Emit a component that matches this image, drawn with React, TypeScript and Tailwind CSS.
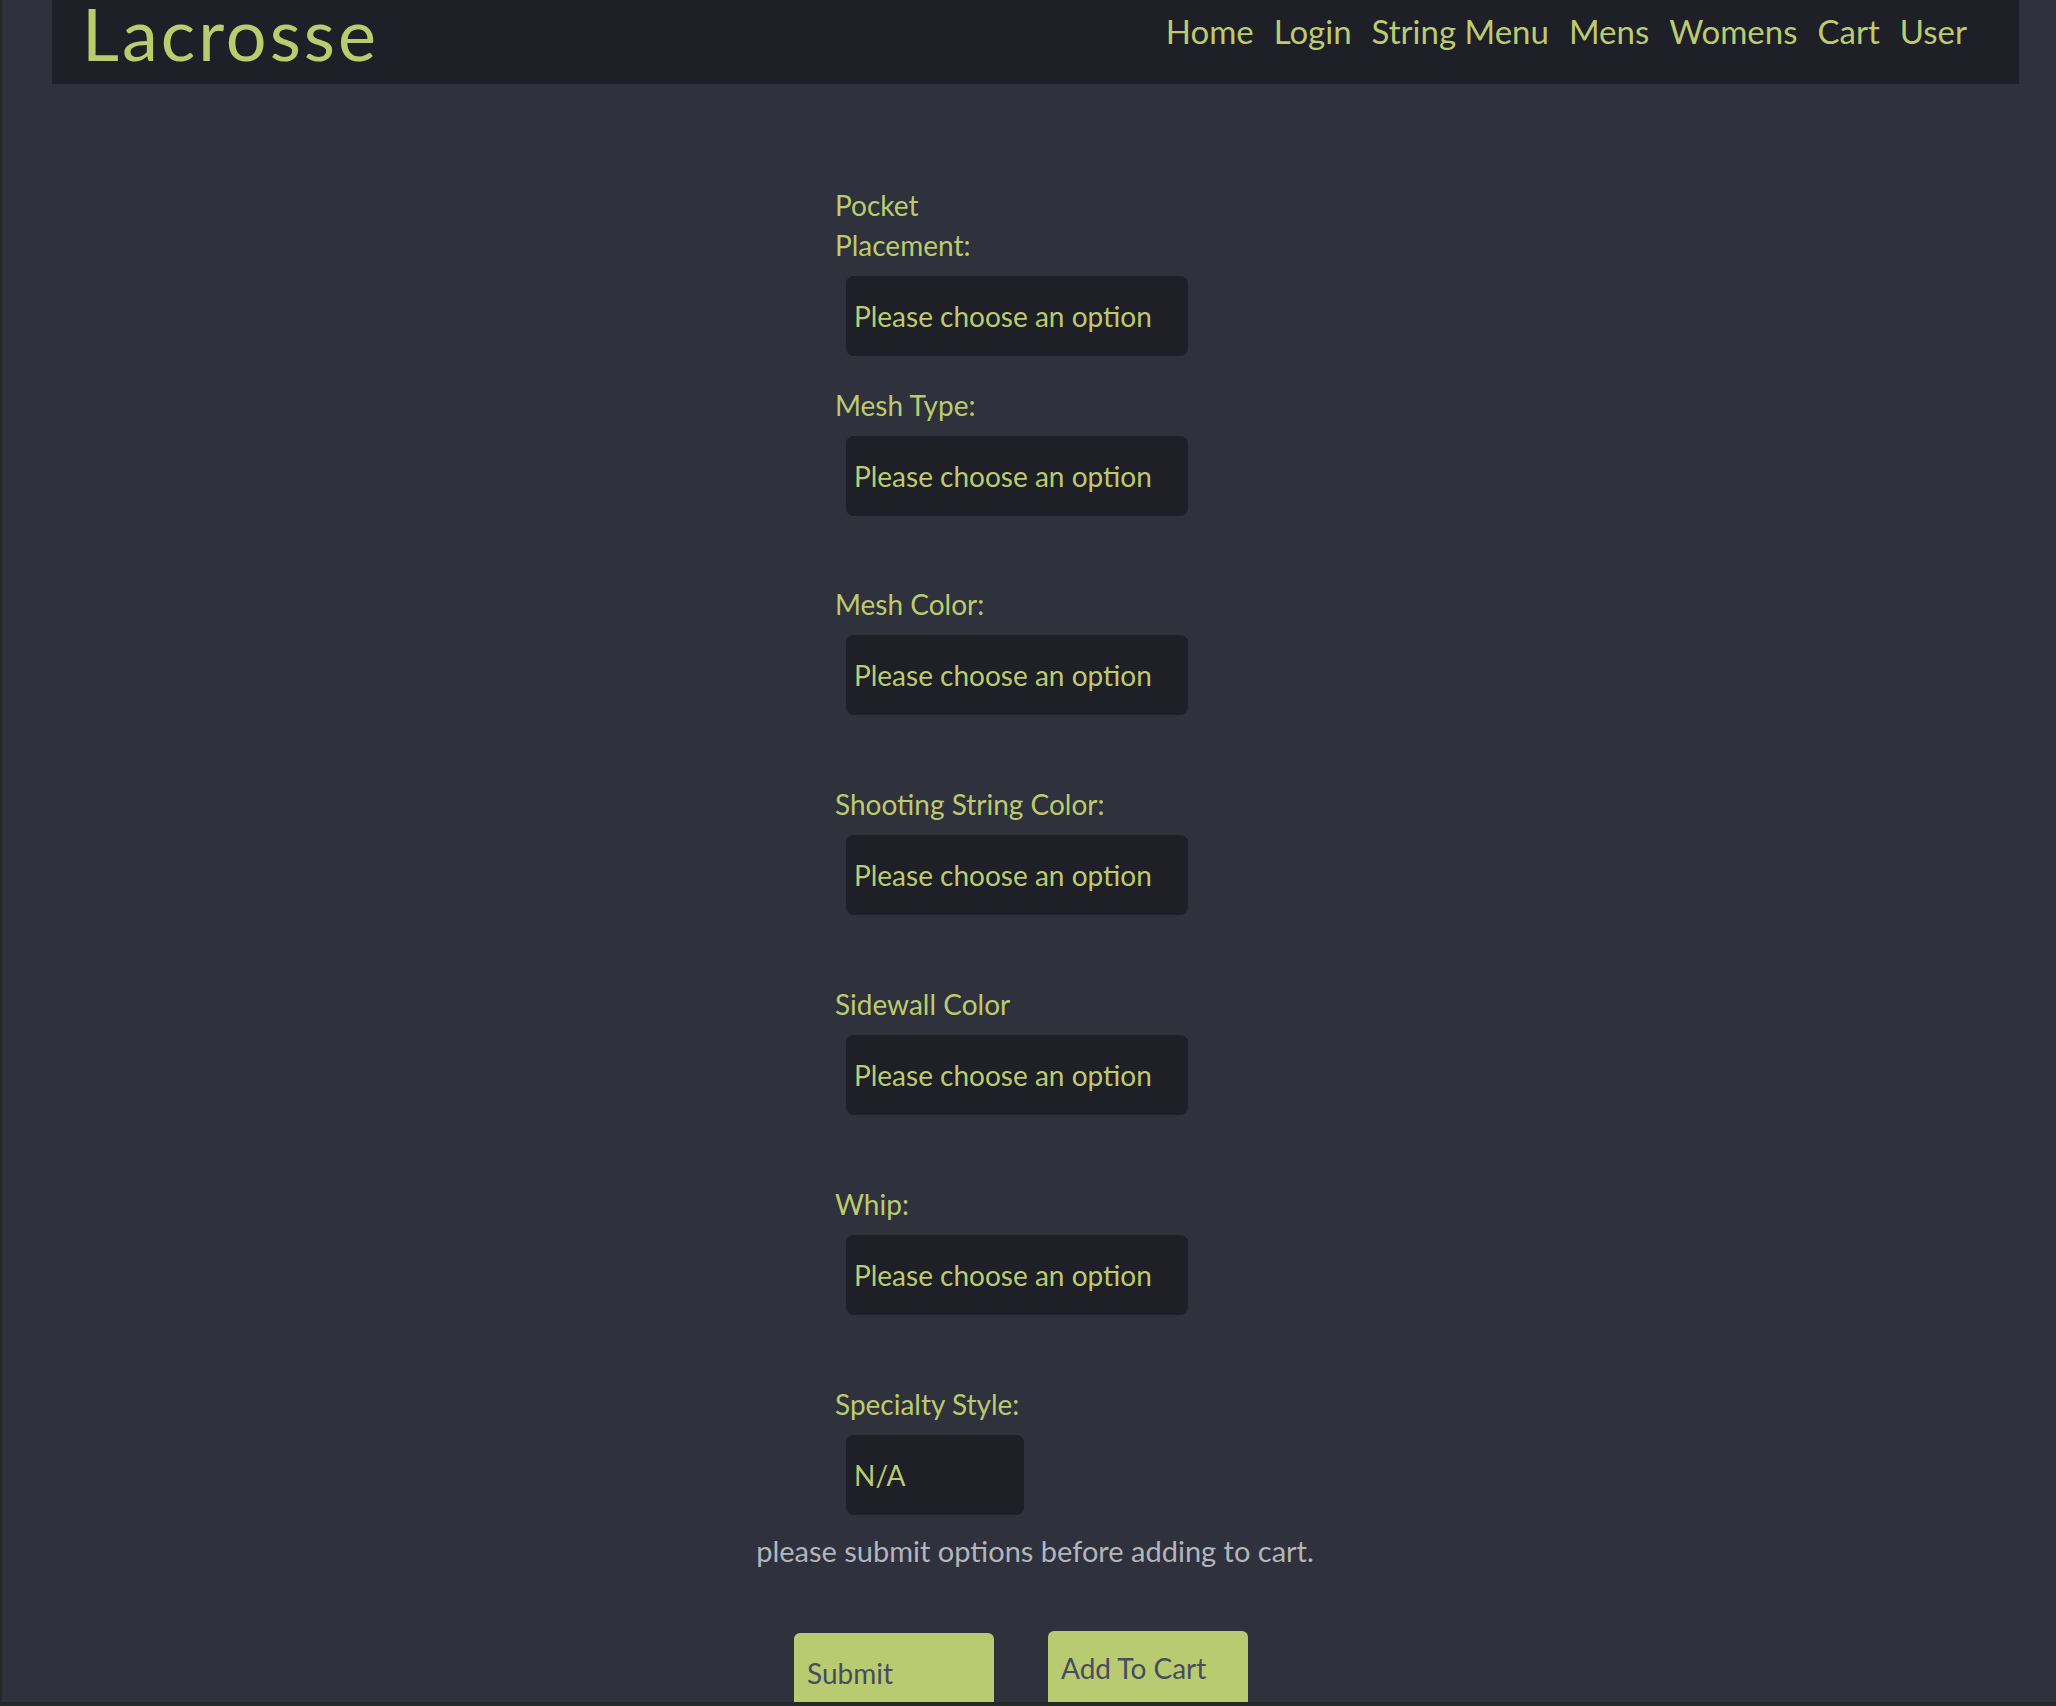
const navLinks = ['Home', 'Login', 'String Menu', 'Mens', 'Womens', 'Cart', 'User'];

const fields: { label: string; value: string; narrow?: boolean; small?: boolean; gap: string }[] = [
  { label: 'Pocket Placement:', value: 'Please choose an option', narrow: true, gap: 'mt-[101px]' },
  { label: 'Mesh Type:', value: 'Please choose an option', gap: 'mt-[29px]' },
  { label: 'Mesh Color:', value: 'Please choose an option', gap: 'mt-[68px]' },
  { label: 'Shooting String Color:', value: 'Please choose an option', gap: 'mt-[69px]' },
  { label: 'Sidewall Color', value: 'Please choose an option', gap: 'mt-[69px]' },
  { label: 'Whip:', value: 'Please choose an option', gap: 'mt-[69px]' },
  { label: 'Specialty Style:', value: 'N/A', small: true, gap: 'mt-[69px]' },
];

const Header = () => {
  return (
    <header className="ml-[50px] mr-[37px] h-[84px] bg-[#1e1f27] flex justify-between items-start overflow-hidden">
      <h1 className="ml-[30px] mt-[-3px] text-[72px] leading-[72px] text-[#bccb6e] tracking-[3px]">
        Lacrosse
      </h1>
      <nav className="pt-[15px] pr-[52px] flex gap-[20px] text-[33px] leading-[33px] text-[#bccb6e]">
        {navLinks.map(link => (
          <a key={link} href="#" className="whitespace-nowrap">
            {link}
          </a>
        ))}
      </nav>
    </header>
  );
};

const Field = ({ label, value, narrow, small, gap }: (typeof fields)[number]) => {
  return (
    <div className={gap}>
      <p className={`text-[28px] leading-[40px] text-[#bccb6e] ${narrow ? 'w-[150px]' : ''}`}>{label}</p>
      <div
        className={`mt-[11px] ml-[11px] h-[80px] rounded-lg bg-[#1e1f27] pl-2 flex items-center text-[28px] leading-[40px] text-[#bccb6e] ${
          small ? 'w-[178px]' : 'w-[342px]'
        }`}
      >
        {value}
      </div>
    </div>
  );
};

export default function App() {
  return (
    <div className="h-[1706px] overflow-hidden bg-[#2f313c] border-l-2 border-b-4 border-[#27272a] font-['Lato',sans-serif]">
      <Header />
      {/* options form */}
      <div className="w-[388px] mx-auto">
        {fields.map(f => (
          <Field key={f.label} {...f} />
        ))}
      </div>
      <p className="mt-[16px] text-center text-[29px] leading-[40px] text-[#b3b5bd] pl-[12px]">
        please submit options before adding to cart.
      </p>
      <div className="mt-[60px] flex justify-center gap-[54px] pr-[16px]">
        <button className="mt-[2px] w-[200px] h-[90px] rounded-md bg-[#b9cb70] flex items-start text-left pl-[13px] pt-[20px] self-start text-[28px] leading-[40px] text-[#474c60]">
          <span className="block">Submit</span>
        </button>
        <button className="w-[200px] h-[90px] rounded-md bg-[#b9cb70] flex items-start text-left pl-[13px] pt-[17px] self-start text-[28px] leading-[40px] text-[#474c60]">
          <span className="block">Add To Cart</span>
        </button>
      </div>
    </div>
  );
}
